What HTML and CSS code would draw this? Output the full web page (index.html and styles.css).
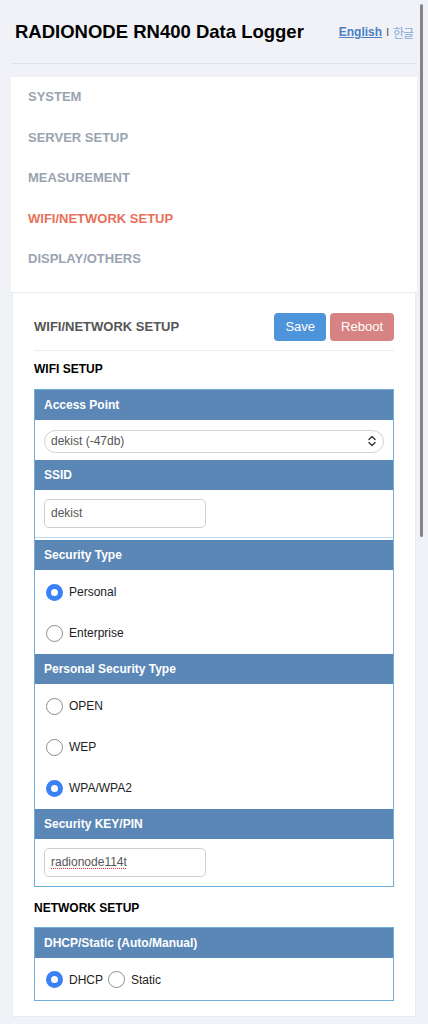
FILE: index.html
```html
<!DOCTYPE html>
<html>
  <head>
    <meta charset="utf-8">
    <title>RADIONODE RN400 Data Logger</title>
    <link rel="stylesheet" href="styles.css">
  </head>
  <body>
    <div class="page">
      <header class="top">
        <h1>RADIONODE RN400 Data Logger</h1>
        <div class="lang">
          <a href="#" class="lang-on">English</a>
          <span class="lang-sep">I</span>
          <a href="#">한글</a>
        </div>
      </header>

      <nav class="menu">
        <a href="#">SYSTEM</a>
        <a href="#">SERVER SETUP</a>
        <a href="#">MEASUREMENT</a>
        <a href="#" class="active">WIFI/NETWORK SETUP</a>
        <a href="#">DISPLAY/OTHERS</a>
      </nav>

      <section class="panel">
        <div class="panel-head">
          <h2>WIFI/NETWORK SETUP</h2>
          <div class="actions">
            <button type="button" class="btn btn-save">Save</button>
            <button type="button" class="btn btn-reboot">Reboot</button>
          </div>
        </div>

        <h3 class="group-title">WIFI SETUP</h3>
        <div class="box">
          <div class="box-head">Access Point</div>
          <div class="box-body box-select">
            <select class="field-select">
              <option>dekist (-47db)</option>
            </select>
          </div>

          <div class="box-head">SSID</div>
          <div class="box-body box-input box-split">
            <input type="text" class="field-text" value="dekist">
          </div>

          <div class="box-head">Security Type</div>
          <div class="box-body box-radios">
            <label class="opt"><input type="radio" name="sec-type" checked> Personal</label>
            <label class="opt"><input type="radio" name="sec-type"> Enterprise</label>
          </div>

          <div class="box-head">Personal Security Type</div>
          <div class="box-body box-radios">
            <label class="opt"><input type="radio" name="psk-type"> OPEN</label>
            <label class="opt"><input type="radio" name="psk-type"> WEP</label>
            <label class="opt"><input type="radio" name="psk-type" checked> WPA/WPA2</label>
          </div>

          <div class="box-head">Security KEY/PIN</div>
          <div class="box-body box-input">
            <input type="text" class="field-text field-misspelled" value="radionode114t">
          </div>
        </div>

        <h3 class="group-title group-net">NETWORK SETUP</h3>
        <div class="box">
          <div class="box-head">DHCP/Static (Auto/Manual)</div>
          <div class="box-body box-inline">
            <label class="opt"><input type="radio" name="ip-mode" checked> DHCP</label>
            <label class="opt"><input type="radio" name="ip-mode"> Static</label>
          </div>
        </div>
      </section>
    </div>
    <div class="scroll-thumb"></div>
  </body>
</html>
```

FILE: styles.css
```css
html, body {
  margin: 0;
  padding: 0;
}

body {
  background: #f0f2f7;
  font-family: "Liberation Sans", Arial, "Noto Sans CJK KR", sans-serif;
  color: #222;
}

.page {
  padding: 0 11px 9px;
}

/* header */
.top {
  display: flex;
  justify-content: space-between;
  align-items: center;
  padding: 20px 4px 19px;
  border-bottom: 1px solid #dfe2e8;
}

.top h1 {
  margin: 0;
  font-size: 18.5px;
  line-height: 24px;
  font-weight: bold;
  color: #000;
}

.lang {
  display: flex;
  align-items: center;
  gap: 4px;
  font-size: 12px;
}

.lang a {
  color: #7fa9d9;
  text-decoration: none;
  font-family: "Noto Sans CJK KR", sans-serif;
  font-size: 12px;
  letter-spacing: -1px;
}

.lang a.lang-on {
  font-family: "Liberation Sans", Arial, sans-serif;
  font-size: 12px;
  font-weight: bold;
  letter-spacing: 0;
  color: #4a7fc2;
  text-decoration: underline;
}

.lang-sep {
  color: #444;
  font-size: 10px;
}

/* side menu */
.menu {
  margin-top: 13px;
  background: #fff;
  padding: 0 0 12px 17px;
}

.menu a {
  display: block;
  line-height: 40.5px;
  font-size: 13px;
  font-weight: bold;
  color: #9aa4b1;
  text-decoration: none;
}

.menu a.active {
  color: #e8705b;
}

/* setup panel */
.panel {
  margin: 0 1px;
  background: #fff;
  border: 1px solid #e6eaf1;
  padding: 20px 21px 15px;
}

.panel-head {
  display: flex;
  justify-content: space-between;
  align-items: center;
  padding-bottom: 9px;
  border-bottom: 1px solid #ececec;
}

.panel-head h2 {
  margin: 0;
  font-size: 13px;
  font-weight: bold;
  color: #555;
}

.actions {
  display: flex;
  gap: 4px;
}

.btn {
  height: 28px;
  padding: 0 11px;
  border: none;
  border-radius: 4px;
  font-family: "Liberation Sans", Arial, sans-serif;
  font-size: 13px;
  color: #fff;
}

.btn-save {
  background: #4e94da;
}

.btn-reboot {
  background: #d88383;
}

.group-title {
  margin: 11px 0 13px;
  font-size: 12px;
  line-height: 14px;
  font-weight: bold;
  color: #000;
}

.group-net {
  margin: 14px 0 12px;
}

.box {
  border: 1px solid #6db0dc;
}

.box-head {
  height: 30px;
  line-height: 30px;
  padding-left: 9px;
  background: #5b87b6;
  color: #fff;
  font-size: 12px;
  font-weight: bold;
}

.box-select {
  padding: 10px 9px 7px;
}

.box-input {
  padding: 9px 9px;
}

.box-split {
  border-bottom: 1px solid #bcd9ee;
  margin-bottom: 2px;
}

.box-radios {
  padding: 2px 0 0 11px;
}

.box-radios .opt {
  display: flex;
  align-items: center;
  height: 41px;
}

.box-inline {
  display: flex;
  align-items: center;
  gap: 5px;
  height: 40px;
  padding: 2px 0 0 11px;
}

.opt {
  font-size: 12px;
  color: #222;
}

.box-inline .opt {
  display: flex;
  align-items: center;
}

.opt input {
  appearance: none;
  -webkit-appearance: none;
  box-sizing: border-box;
  width: 17px;
  height: 17px;
  margin: 0 6px 0 0;
  border: 1.5px solid #8c8c8c;
  border-radius: 50%;
  background: #fff;
}

.opt input:checked {
  border: 5px solid #3a80f6;
}

.field-select {
  appearance: none;
  -webkit-appearance: none;
  box-sizing: border-box;
  width: 100%;
  height: 23px;
  padding: 0 0 0 6px;
  border: 1px solid #d2d2d2;
  border-radius: 12px;
  background: #fff url("data:image/svg+xml;utf8,<svg xmlns='http://www.w3.org/2000/svg' width='10' height='12' viewBox='0 0 10 12'><path d='M2 4.5 5 1.5 8 4.5M2 7.5 5 10.5 8 7.5' fill='none' stroke='%23444' stroke-width='1.6' stroke-linecap='round' stroke-linejoin='round'/></svg>") no-repeat right 6px center;
  font-family: "Liberation Sans", Arial, sans-serif;
  font-size: 12px;
  color: #555;
}

.field-text {
  box-sizing: border-box;
  width: 162px;
  height: 29px;
  padding: 0 6px;
  border: 1px solid #cfcfcf;
  border-radius: 5px;
  font-family: "Liberation Sans", Arial, sans-serif;
  font-size: 12px;
  color: #555;
}

.field-misspelled {
  text-decoration: underline dotted #e03c3c;
  text-underline-offset: 2px;
}

.scroll-thumb {
  position: fixed;
  top: 4px;
  right: 5px;
  width: 3px;
  height: 533px;
  border-radius: 2px;
  background: #858585;
}
```
